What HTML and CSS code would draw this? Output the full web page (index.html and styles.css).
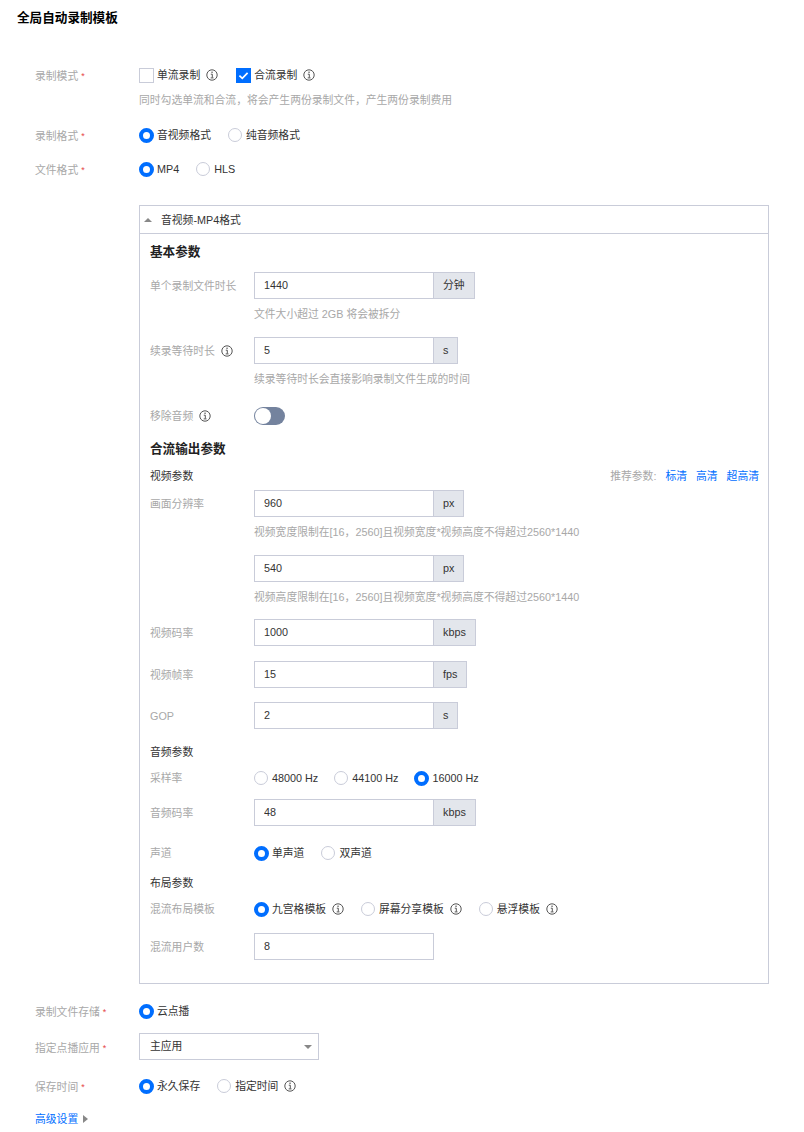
FILE: index.html
```html
<!DOCTYPE html>
<html lang="zh-CN">

<head>
    <meta charset="utf-8">
    <title>全局自动录制模板</title>
    <link rel="stylesheet" href="styles.css">
</head>

<body>

    <svg class="sprite" width="0" height="0">
        <symbol id="info" viewBox="0 0 12 12">
            <circle cx="6" cy="6" r="5.2" fill="none" stroke="currentColor" stroke-width="1"/>
            <rect x="5.4" y="2.6" width="1.3" height="1.3" fill="currentColor"/>
            <path d="M4.8 5.2H6.3V8.6M4.7 8.9H7.5" fill="none" stroke="currentColor" stroke-width="1"/>
        </symbol>
    </svg>

    <h1 class="title">全局自动录制模板</h1>

    <form class="form">

        <div class="row mt-30">
            <div class="label outer">录制模式 <i>*</i></div>
            <div class="options wide">
                <span class="opt"><span class="check"></span>单流录制<svg class="info"><use href="#info"/></svg></span>
                <span class="opt"><span class="check on"><svg viewBox="0 0 15 15"><path d="M3.4 7.6L6.3 10.4L11.6 4.9" fill="none" stroke="#fff" stroke-width="1.7"/></svg></span>合流录制<svg class="info"><use href="#info"/></svg></span>
            </div>
        </div>
        <div class="help top-help mt-8">同时勾选单流和合流，将会产生两份录制文件，产生两份录制费用</div>

        <div class="row mt-18">
            <div class="label outer">录制格式 <i>*</i></div>
            <div class="options">
                <span class="opt"><span class="radio on"></span>音视频格式</span>
                <span class="opt"><span class="radio"></span>纯音频格式</span>
            </div>
        </div>

        <div class="row mt-16">
            <div class="label outer">文件格式 <i>*</i></div>
            <div class="options">
                <span class="opt"><span class="radio on"></span>MP4</span>
                <span class="opt"><span class="radio"></span>HLS</span>
            </div>
        </div>

        <div class="panel">
            <div class="panel-head"><span class="arrow-up"></span>音视频-MP4格式</div>
            <div class="panel-body">

                <h2 class="section">基本参数</h2>

                <div class="row mt-12">
                    <div class="label">单个录制文件时长</div>
                    <div class="group"><input class="input" value="1440"><span class="addon">分钟</span></div>
                </div>
                <div class="help mt-7">文件大小超过 2GB 将会被拆分</div>

                <div class="row mt-15">
                    <div class="label">续录等待时长<svg class="info"><use href="#info"/></svg></div>
                    <div class="group"><input class="input" value="5"><span class="addon">s</span></div>
                </div>
                <div class="help mt-7">续录等待时长会直接影响录制文件生成的时间</div>

                <div class="row mt-20">
                    <div class="label">移除音频<svg class="info"><use href="#info"/></svg></div>
                    <span class="switch"></span>
                </div>

                <h2 class="section mt-14">合流输出参数</h2>

                <div class="subhead mt-10">
                    <span>视频参数</span>
                    <span class="presets">推荐参数:<a>标清</a><a>高清</a><a>超高清</a></span>
                </div>

                <div class="row mt-5">
                    <div class="label">画面分辨率</div>
                    <div class="group"><input class="input" value="960"><span class="addon">px</span></div>
                </div>
                <div class="help mt-7">视频宽度限制在[16，2560]且视频宽度*视频高度不得超过2560*1440</div>

                <div class="row mt-15">
                    <div class="label"></div>
                    <div class="group"><input class="input" value="540"><span class="addon">px</span></div>
                </div>
                <div class="help mt-7">视频高度限制在[16，2560]且视频宽度*视频高度不得超过2560*1440</div>

                <div class="row mt-14">
                    <div class="label">视频码率</div>
                    <div class="group"><input class="input" value="1000"><span class="addon">kbps</span></div>
                </div>

                <div class="row mt-15">
                    <div class="label">视频帧率</div>
                    <div class="group"><input class="input" value="15"><span class="addon">fps</span></div>
                </div>

                <div class="row mt-14">
                    <div class="label">GOP</div>
                    <div class="group"><input class="input" value="2"><span class="addon">s</span></div>
                </div>

                <div class="subhead mt-14">音频参数</div>

                <div class="row mt-8">
                    <div class="label">采样率</div>
                    <div class="options narrow">
                        <span class="opt"><span class="radio"></span>48000 Hz</span>
                        <span class="opt"><span class="radio"></span>44100 Hz</span>
                        <span class="opt"><span class="radio on"></span>16000 Hz</span>
                    </div>
                </div>

                <div class="row mt-12">
                    <div class="label">音频码率</div>
                    <div class="group"><input class="input" value="48"><span class="addon">kbps</span></div>
                </div>

                <div class="row mt-18">
                    <div class="label">声道</div>
                    <div class="options">
                        <span class="opt"><span class="radio on"></span>单声道</span>
                        <span class="opt"><span class="radio"></span>双声道</span>
                    </div>
                </div>

                <div class="subhead mt-12">布局参数</div>

                <div class="row mt-8">
                    <div class="label">混流布局模板</div>
                    <div class="options">
                        <span class="opt"><span class="radio on"></span>九宫格模板<svg class="info"><use href="#info"/></svg></span>
                        <span class="opt"><span class="radio"></span>屏幕分享模板<svg class="info"><use href="#info"/></svg></span>
                        <span class="opt"><span class="radio"></span>悬浮模板<svg class="info"><use href="#info"/></svg></span>
                    </div>
                </div>

                <div class="row mt-15">
                    <div class="label">混流用户数</div>
                    <input class="input" value="8">
                </div>

            </div>
        </div>

        <div class="row mt-18">
            <div class="label outer">录制文件存储 <i>*</i></div>
            <div class="options">
                <span class="opt"><span class="radio on"></span>云点播</span>
            </div>
        </div>

        <div class="row mt-13">
            <div class="label outer">指定点播应用 <i>*</i></div>
            <div class="select">主应用<span class="arrow-down"></span></div>
        </div>

        <div class="row mt-17">
            <div class="label outer">保存时间 <i>*</i></div>
            <div class="options">
                <span class="opt"><span class="radio on"></span>永久保存</span>
                <span class="opt"><span class="radio"></span>指定时间<svg class="info"><use href="#info"/></svg></span>
            </div>
        </div>

        <div class="advanced mt-15"><a>高级设置</a><span class="arrow-right"></span></div>

    </form>

</body>

</html>
```

FILE: styles.css
```css
body{
    margin: 0;
    background: #fff;
    color: #333;
    font-family: "Liberation Sans", "Noto Sans CJK SC", sans-serif;
    font-size: 10.8px;
    line-height: 18px;
}

.sprite{
    position: absolute;
}

.title{
    margin: 0;
    padding: 9px 17px;
    height: 18px;
    font-size: 12.6px;
    line-height: 18px;
    font-weight: bold;
    color: #000;
}

.form{
    padding: 0 35px;
}

.row{
    display: flex;
    align-items: center;
}

.label{
    flex: 0 0 104px;
    display: flex;
    align-items: center;
    color: #a8a8a8;
    white-space: pre;
}

.label.outer{
    height: 18px;
    box-sizing: border-box;
    padding-top: 2px;
}

.label i{
    color: #e54545;
    font-size: 9px;
    font-style: normal;
}

.label .info{
    margin-left: 6px;
}

.options{
    display: flex;
    gap: 17px;
}

.options.wide{
    gap: 18px;
}

.options.narrow{
    gap: 16px;
}

.opt{
    display: flex;
    align-items: center;
}

.info{
    width: 12px;
    height: 12px;
    margin-left: 6px;
    color: #555;
    flex: none;
}

.check{
    width: 15px;
    height: 15px;
    margin-right: 3px;
    box-sizing: border-box;
    border: 1px solid #c9ccd9;
}

.check.on{
    background: #006eff;
    border: 0;
}

.check svg{
    display: block;
    width: 15px;
    height: 15px;
}

.radio{
    width: 14px;
    height: 14px;
    margin-right: 4px;
    box-sizing: border-box;
    border: 1px solid #c9ccd9;
    border-radius: 50%;
}

.radio.on{
    width: 15px;
    height: 15px;
    margin-right: 3px;
    border: 4px solid #006eff;
}

.help{
    height: 16px;
    line-height: 16px;
    margin-left: 104px;
    color: #a8a8a8;
}

.top-help{
    white-space: nowrap;
}

.panel{
    margin-top: 27px;
    margin-left: 104px;
    border: 1px solid #c9ccd9;
}

.panel-head{
    height: 27px;
    padding-left: 4px;
    border-bottom: 1px solid #c9ccd9;
    display: flex;
    align-items: center;
}

.arrow-up{
    width: 0;
    height: 0;
    margin-right: 9px;
    border-left: 4px solid transparent;
    border-right: 4px solid transparent;
    border-bottom: 4px solid #888;
}

.panel-body{
    padding: 8px 9px 23px 10px;
}

.section{
    margin: 0;
    padding-top: 1px;
    height: 17px;
    font-size: 12.6px;
    line-height: 18px;
    font-weight: bold;
    color: #222;
}

.subhead{
    display: flex;
    justify-content: space-between;
    color: #333;
}

.presets{
    color: #a8a8a8;
}

.presets a{
    margin-left: 9px;
    color: #006eff;
}

.group{
    display: flex;
}

.input{
    width: 180px;
    height: 27px;
    box-sizing: border-box;
    margin: 0;
    padding: 0 9px 2px;
    border: 1px solid #c9ccd9;
    border-radius: 0;
    outline: 0;
    color: #333;
    font: inherit;
}

.addon{
    height: 27px;
    box-sizing: border-box;
    padding: 0 9px;
    line-height: 25px;
    border: 1px solid #c9ccd9;
    border-left: 0;
    background: #e3e6ec;
}

.switch{
    position: relative;
    width: 31px;
    height: 18px;
    border-radius: 9px;
    background: #74839e;
}

.switch::after{
    content: "";
    position: absolute;
    left: 1px;
    top: 1px;
    width: 16px;
    height: 16px;
    border-radius: 50%;
    background: #fff;
}

.select{
    position: relative;
    width: 180px;
    height: 27px;
    box-sizing: border-box;
    padding-left: 10px;
    line-height: 25px;
    border: 1px solid #c9ccd9;
}

.arrow-down{
    position: absolute;
    right: 6px;
    top: 11px;
    width: 0;
    height: 0;
    border-left: 4px solid transparent;
    border-right: 4px solid transparent;
    border-top: 4px solid #888;
}

.advanced{
    display: flex;
    align-items: center;
}

.advanced a{
    color: #006eff;
}

.arrow-right{
    width: 0;
    height: 0;
    margin-left: 5px;
    border-top: 4px solid transparent;
    border-bottom: 4px solid transparent;
    border-left: 5px solid #888;
}

.mt-5{ margin-top: 5px; }
.mt-7{ margin-top: 7px; }
.mt-8{ margin-top: 8px; }
.mt-10{ margin-top: 10px; }
.mt-12{ margin-top: 12px; }
.mt-13{ margin-top: 13px; }
.mt-14{ margin-top: 14px; }
.mt-15{ margin-top: 15px; }
.mt-16{ margin-top: 16px; }
.mt-17{ margin-top: 17px; }
.mt-18{ margin-top: 18px; }
.mt-20{ margin-top: 20px; }
.mt-30{ margin-top: 30px; }
```
